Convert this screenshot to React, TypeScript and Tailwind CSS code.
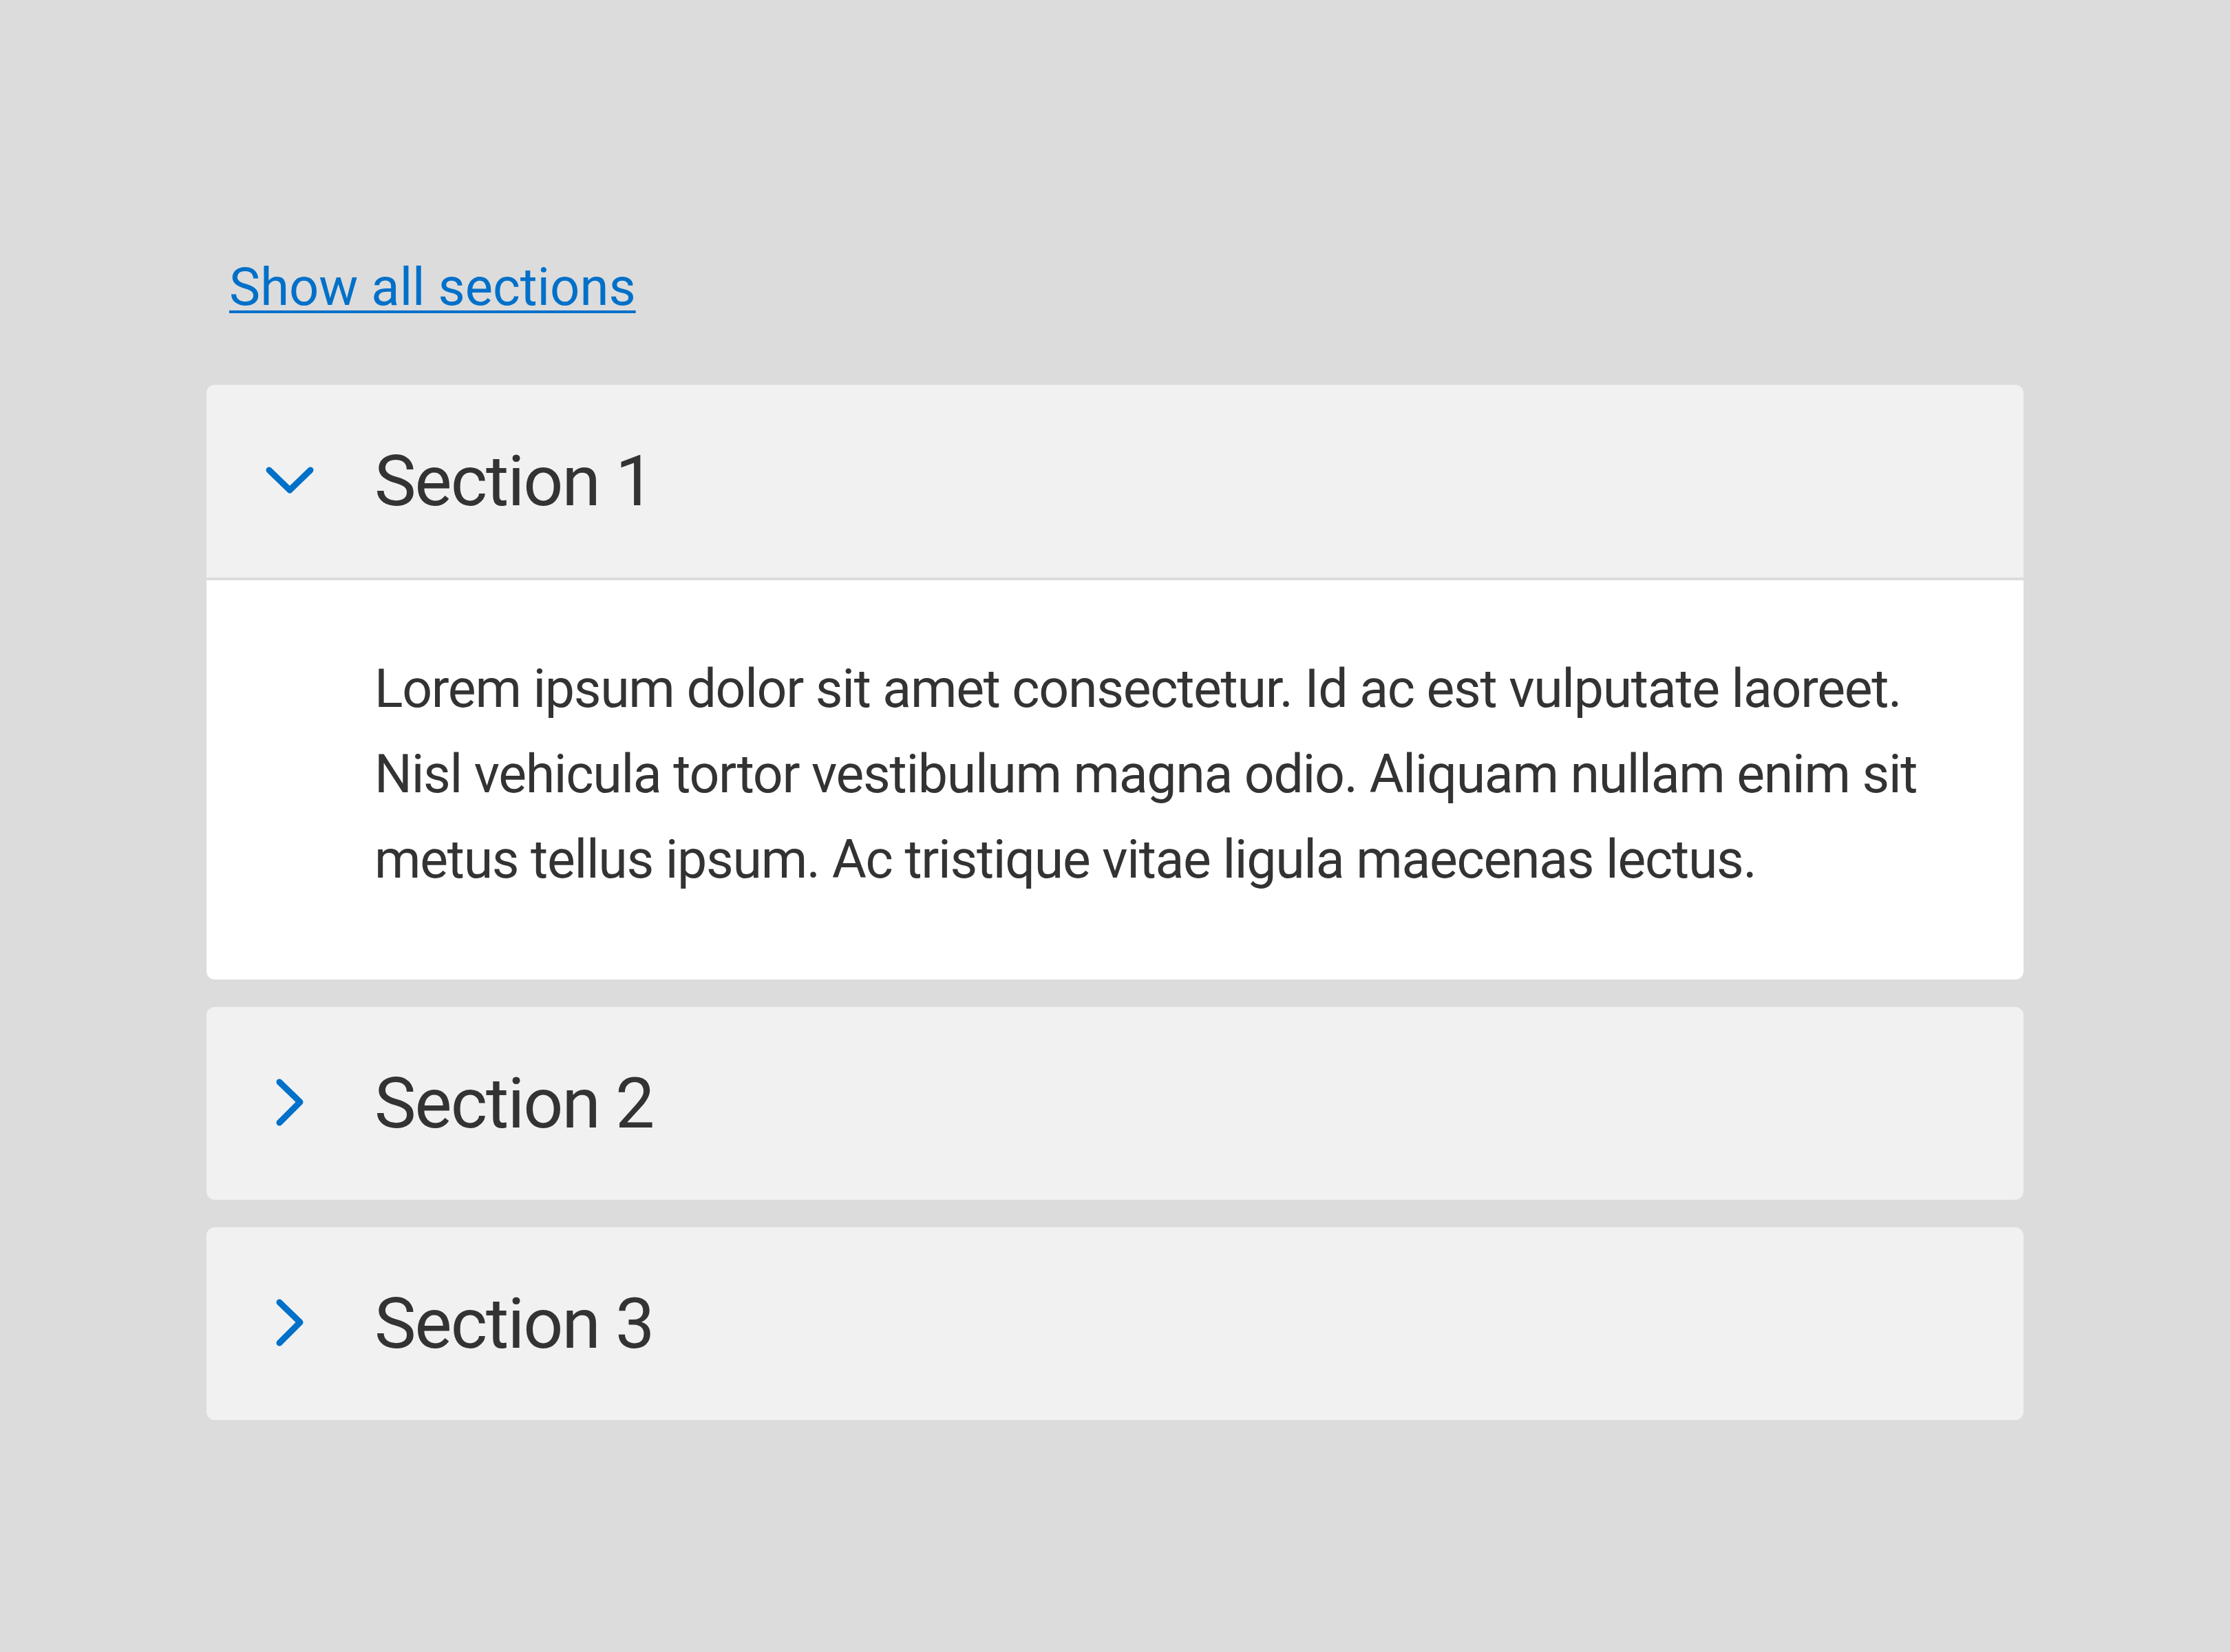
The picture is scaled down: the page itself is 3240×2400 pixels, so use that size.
import { useState } from "react";

const SECTIONS = [
  {
    id: 1,
    title: "Section 1",
    body: "Lorem ipsum dolor sit amet consectetur. Id ac est vulputate laoreet. Nisl vehicula tortor vestibulum magna odio. Aliquam nullam enim sit metus tellus ipsum. Ac tristique vitae ligula maecenas lectus.",
  },
  {
    id: 2,
    title: "Section 2",
    body: "Lorem ipsum dolor sit amet consectetur. Id ac est vulputate laoreet.",
  },
  {
    id: 3,
    title: "Section 3",
    body: "Lorem ipsum dolor sit amet consectetur. Id ac est vulputate laoreet.",
  },
];

function Chevron({ open }: { open: boolean }) {
  return (
    <svg
      viewBox="0 0 72 72"
      className="w-[72px] h-[72px] shrink-0 text-[#0070c9]"
      fill="none"
      stroke="currentColor"
      strokeWidth={9}
      strokeLinecap="round"
      strokeLinejoin="round"
    >
      {open ? <path d="M6 20 L36 49 L66 20" /> : <path d="M21 5 L51 34 L21 64" />}
    </svg>
  );
}

export default function App() {
  const [open, setOpen] = useState<number[]>([1]);

  const toggle = (id: number) =>
    setOpen((o) => (o.includes(id) ? o.filter((x) => x !== id) : [...o, id]));

  return (
    <div className="min-h-screen bg-[#dcdcdc] px-[300px] pt-[379px] font-['Roboto',_'Liberation_Sans',_sans-serif] text-[#333333]">
      <button
        type="button"
        onClick={() => setOpen(SECTIONS.map((s) => s.id))}
        className="ml-[33px] block text-[76px] leading-none text-[#0070c9] underline decoration-[4px] underline-offset-[8px]"
      >
        Show all sections
      </button>

      <div className="mt-[104px] flex flex-col gap-[40px]">
        {SECTIONS.map((s) => {
          const isOpen = open.includes(s.id);
          return (
            <div key={s.id} className="rounded-[12px] overflow-hidden">
              <button
                type="button"
                onClick={() => toggle(s.id)}
                className={`flex w-full h-[280px] items-center gap-[87px] bg-[#f1f1f1] pl-[85px] text-left ${
                  isOpen ? "border-b-[4px] border-[#dcdcdc] h-[284px]" : ""
                }`}
              >
                <Chevron open={isOpen} />
                <span className="text-[102px] leading-none tracking-[-2px]">{s.title}</span>
              </button>
              {isOpen && (
                <div className="bg-white pl-[244px] pr-[95px] pt-[96px] pb-[112px]">
                  <p className="text-[77px] leading-[124px] tracking-[-1.3px]">{s.body}</p>
                </div>
              )}
            </div>
          );
        })}
      </div>
    </div>
  );
}
